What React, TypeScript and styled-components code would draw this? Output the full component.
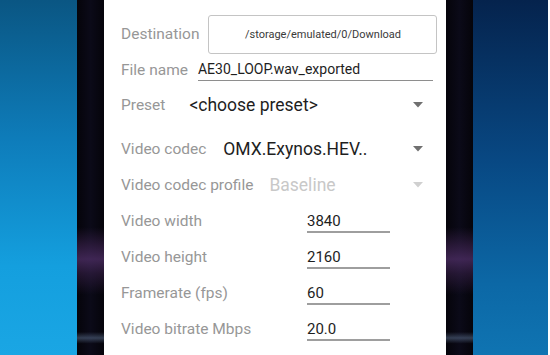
import React from "react";
import styled, { createGlobalStyle } from "styled-components";

const GlobalStyle = createGlobalStyle`
  html, body {
    margin: 0;
    padding: 0;
    width: 550px;
    height: 355px;
    overflow: hidden;
  }
  body {
    font-family: Roboto, "Noto Sans", sans-serif;
  }
`;

type NumField = { label: string; value: string };

const numericFields: NumField[] = [
  { label: "Video width", value: "3840" },
  { label: "Video height", value: "2160" },
  { label: "Framerate (fps)", value: "60" },
  { label: "Video bitrate Mbps", value: "20.0" },
];

const Arrow = ({ disabled }: { disabled?: boolean }) => (
  <ArrowSvg width="10" height="6" viewBox="0 0 10 6">
    <path d="M0 0 L10 0 L5 5.5 Z" fill={disabled ? "#d0d0d0" : "#707070"} />
  </ArrowSvg>
);

const App = () => {
  return (
    <>
      <GlobalStyle />
      <Scene>
        <Wallpaper side="left" />
        <Bezel />
        <Panel>
          <Row height={36} top={16}>
            <Label>Destination</Label>
            <PathBox>/storage/emulated/0/Download</PathBox>
          </Row>
          <Row height={36}>
            <Label>File name</Label>
            <TextInput gap={10}>AE30_LOOP.wav_exported</TextInput>
          </Row>
          <Row height={34}>
            <Label>Preset</Label>
            <Spinner gap={24}>
              <SpinnerValue>&lt;choose preset&gt;</SpinnerValue>
              <Arrow />
            </Spinner>
          </Row>
          <Row height={36} top={9}>
            <Label>Video codec</Label>
            <Spinner gap={17}>
              <SpinnerValue>OMX.Exynos.HEV..</SpinnerValue>
              <Arrow />
            </Spinner>
          </Row>
          <Row height={36}>
            <Label>Video codec profile</Label>
            <Spinner gap={16}>
              <SpinnerValue disabled>Baseline</SpinnerValue>
              <Arrow disabled />
            </Spinner>
          </Row>
          {numericFields.map((f) => (
            <Row height={36} key={f.label}>
              <NumLabel>{f.label}</NumLabel>
              <NumInput>{f.value}</NumInput>
            </Row>
          ))}
        </Panel>
        <Bezel />
        <Wallpaper side="right" />
      </Scene>
    </>
  );
};

export default App;

const Scene = styled.div`
  display: flex;
  width: 550px;
  height: 355px;
  overflow: hidden;
`;

const Wallpaper = styled.div<{ side: "left" | "right" }>`
  flex: none;
  width: ${({ side }) => (side === "left" ? "77px" : "75px")};
  background: ${({ side }) =>
    side === "left"
      ? "linear-gradient(180deg, #0a5683 0%, #0e7dbb 40%, #149fde 75%, #1aa6e4 100%)"
      : "linear-gradient(180deg, #05234d 0%, #084883 45%, #0c68a6 80%, #0f74b2 100%)"};
`;

const Bezel = styled.div`
  flex: none;
  width: 27px;
  background:
    linear-gradient(180deg,
      transparent 0%,
      transparent 64%,
      rgba(70, 40, 90, 0.5) 69%,
      rgba(85, 50, 110, 0.7) 73%,
      rgba(70, 40, 90, 0.45) 77%,
      transparent 83%,
      transparent 93.5%,
      rgba(90, 110, 140, 0.55) 95.2%,
      transparent 96.8%),
    linear-gradient(90deg, #05040a 0%, #0b0a18 50%, #05040a 100%);
`;

const Panel = styled.div`
  flex: none;
  width: 342px;
  background: #ffffff;
  padding: 0 23px 0 17px;
  box-sizing: border-box;
  display: flex;
  flex-direction: column;
`;

const Row = styled.div<{ height: number; top?: number }>`
  display: flex;
  align-items: center;
  height: ${({ height }) => height}px;
  margin-top: ${({ top }) => top ?? 0}px;
  flex: none;
`;

const Label = styled.span`
  font-size: 15.5px;
  color: #979797;
  white-space: nowrap;
`;

const NumLabel = styled(Label)`
  width: 186px;
  flex: none;
`;

const PathBox = styled.div`
  margin-left: 9px;
  flex: none;
  width: 229px;
  height: 39px;
  box-sizing: border-box;
  border: 1px solid #c4c4c4;
  border-radius: 3px;
  display: flex;
  align-items: center;
  justify-content: center;
  font-size: 11px;
  color: #3a3a3a;
`;

const TextInput = styled.div<{ gap: number }>`
  margin-left: ${({ gap }) => gap}px;
  flex: 1;
  margin-right: -10px;
  font-size: 14px;
  color: #1e1e1e;
  padding: 2px 0 3px;
  border-bottom: 1.5px solid #8e8e8e;
  white-space: nowrap;
`;

const Spinner = styled.div<{ gap: number }>`
  margin-left: ${({ gap }) => gap}px;
  flex: 1;
  display: flex;
  align-items: center;
  justify-content: space-between;
`;

const SpinnerValue = styled.span<{ disabled?: boolean }>`
  font-size: 17.5px;
  color: ${({ disabled }) => (disabled ? "#c8c8c8" : "#1e1e1e")};
  white-space: nowrap;
`;

const ArrowSvg = styled.svg`
  flex: none;
  display: block;
`;

const NumInput = styled.div`
  width: 83px;
  font-size: 15px;
  color: #1e1e1e;
  padding: 0 0 1px;
  border-bottom: 2px solid #9e9e9e;
  margin-top: 3px;
`;
